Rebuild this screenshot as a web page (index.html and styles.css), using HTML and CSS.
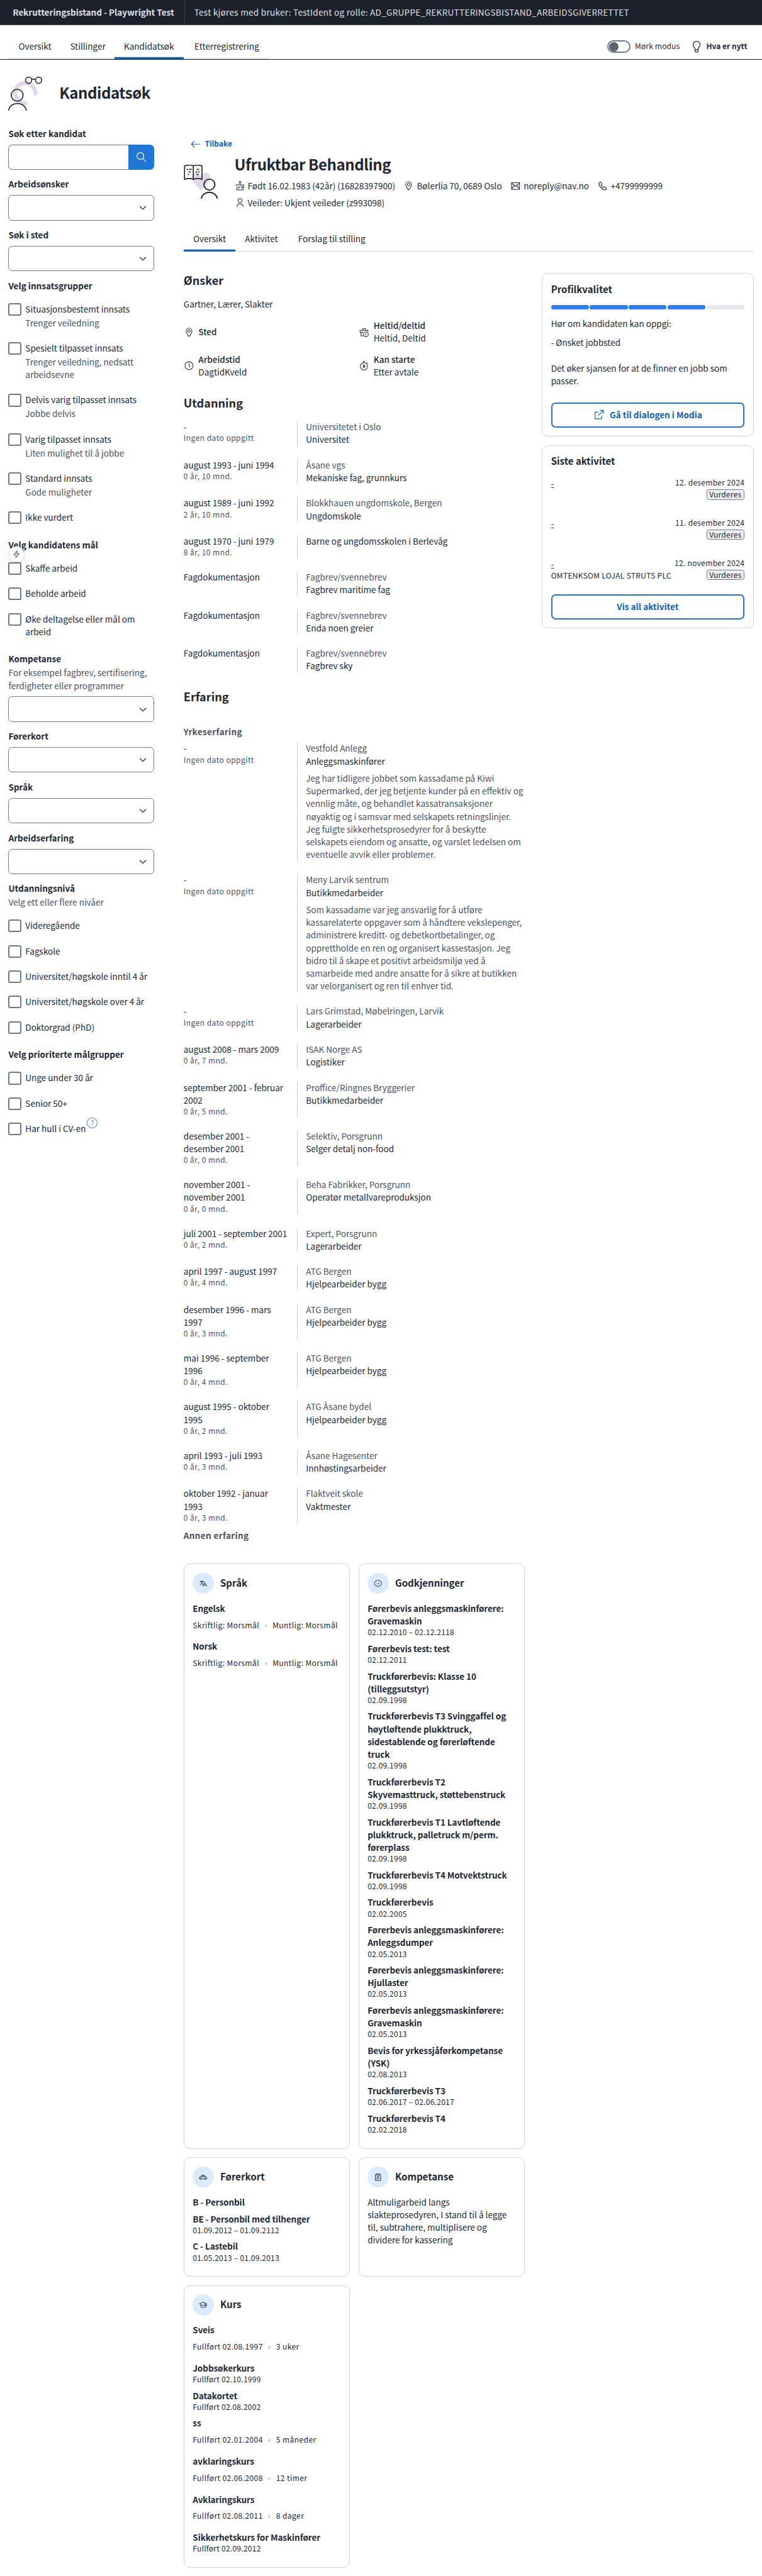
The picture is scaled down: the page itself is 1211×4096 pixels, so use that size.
FILE: index.html
```html
<!DOCTYPE html>
<html lang="no">
<head>
<meta charset="utf-8">
<title>Rekrutteringsbistand</title>
<link rel="stylesheet" href="styles.css">
</head>
<body>
<svg width="0" height="0" class="defs">
  <symbol id="chev" viewBox="0 0 24 24"><path d="M6 9.200l6 5.800 6-5.800"/></symbol>
  <symbol id="pin" viewBox="0 0 24 24"><path d="M12 21.500C8 17 5.500 13 5.500 9.300a6.500 6.700 0 0 1 13 0C18.500 13 16 17 12 21.500z"/><circle cx="12" cy="9.300" r="2.800"/></symbol>
  <symbol id="person" viewBox="0 0 24 24"><circle cx="12" cy="7" r="4.500"/><path d="M5 21.500c0-4.500 3-7 7-7s7 2.500 7 7"/></symbol>
</svg>

<header class="top">
  <p class="top-title">Rekrutteringsbistand - Playwright Test</p>
  <p class="top-user">Test kjøres med bruker: TestIdent og rolle: AD_GRUPPE_REKRUTTERINGSBISTAND_ARBEIDSGIVERRETTET</p>
</header>

<nav class="nav">
  <div class="tabs nav-tabs">
    <a class="tab n1"><span>Oversikt</span></a>
    <a class="tab n2"><span>Stillinger</span></a>
    <a class="tab n3 active"><span>Kandidatsøk</span></a>
    <a class="tab n4"><span>Etterregistrering</span></a>
  </div>
  <div class="nav-right">
    <i class="switch"><i></i></i>
    <span class="t16 mode">Mørk modus</span>
    <svg class="ic bulb" viewBox="0 0 24 24"><path d="M9 18v-2.500C7 13.500 5.500 11.500 5.500 8.500a6.500 6.500 0 0 1 13 0c0 3-1.500 5-3.500 7V18zM9 18v3l1.500 1.500h3L15 21v-3"/></svg>
    <span class="t16 b">Hva er nytt</span>
  </div>
</nav>

<div class="page-title">
  <svg class="illus" viewBox="0 0 64 64">
    <path d="M19 45C8 32 14 13 31 12c12 0 20 9 21 20M20 46c4 4 8 4 13 4" fill="none" stroke="#e0d7e9" stroke-width="7.500" stroke-linecap="round"/>
    <g fill="none" stroke="#262626" stroke-width="1.900"><circle cx="38.500" cy="6.700" r="5.800"/><circle cx="57.500" cy="6.700" r="5.800"/><circle cx="17" cy="35" r="11.200"/><path d="M.8 64C2 56 9 50.500 17.500 50.500S33 56 34.500 64"/></g>
    <path d="M44 6.500c1-4.500 7-4.500 8 0-1.500-1-6.500-1-8 0z" fill="#262626"/>
  </svg>
  <h1>Kandidatsøk</h1>
</div>

<div class="layout">
<aside class="side">
  <div class="field"><p class="b">Søk etter kandidat</p><div class="search"><i class="inp"></i><i class="btn"><svg class="ic" viewBox="0 0 24 24"><circle cx="10" cy="10" r="6.700"/><path d="M15 15l6 6"/></svg></i></div></div>
  <div class="field"><p class="b">Arbeidsønsker</p><div class="select"><svg class="ic"><use href="#chev"/></svg></div></div>
  <div class="field"><p class="b">Søk i sted</p><div class="select"><svg class="ic"><use href="#chev"/></svg></div></div>

  <div class="group g1">
    <p class="b">Velg innsatsgrupper</p>
    <label><i class="box"></i><span><p>Situasjonsbestemt innsats</p><p class="sub">Trenger veiledning</p></span></label>
    <label><i class="box"></i><span><p>Spesielt tilpasset innsats</p><p class="sub l2">Trenger veiledning, nedsatt<br>arbeidsevne</p></span></label>
    <label><i class="box"></i><span><p>Delvis varig tilpasset innsats</p><p class="sub">Jobbe delvis</p></span></label>
    <label><i class="box"></i><span><p>Varig tilpasset innsats</p><p class="sub">Liten mulighet til å jobbe</p></span></label>
    <label><i class="box"></i><span><p>Standard innsats</p><p class="sub">Gode muligheter</p></span></label>
    <label><i class="box"></i><span><p>Ikke vurdert</p></span></label>
  </div>

  <div class="group g2">
    <p class="b">Velg kandidatens mål</p>
    <i class="bolt"><svg viewBox="0 0 24 24"><path d="M13.500 3L5 13.500h5.500V21L19 10.500h-5.500z"/></svg></i>
    <label><i class="box"></i><span><p>Skaffe arbeid</p></span></label>
    <label><i class="box"></i><span><p>Beholde arbeid</p></span></label>
    <label><i class="box"></i><span><p class="l2">Øke deltagelse eller mål om<br>arbeid</p></span></label>
  </div>

  <div class="field desc"><p class="b">Kompetanse</p><p class="sub l2">For eksempel fagbrev, sertifisering,<br>ferdigheter eller programmer</p><div class="select"><svg class="ic"><use href="#chev"/></svg></div></div>
  <div class="field"><p class="b">Førerkort</p><div class="select"><svg class="ic"><use href="#chev"/></svg></div></div>
  <div class="field"><p class="b">Språk</p><div class="select"><svg class="ic"><use href="#chev"/></svg></div></div>
  <div class="field"><p class="b">Arbeidserfaring</p><div class="select"><svg class="ic"><use href="#chev"/></svg></div></div>

  <div class="group g3">
    <p class="b">Utdanningsnivå</p>
    <p class="sub lead">Velg ett eller flere nivåer</p>
    <label><i class="box"></i><span><p>Videregående</p></span></label>
    <label><i class="box"></i><span><p>Fagskole</p></span></label>
    <label><i class="box"></i><span><p>Universitet/høgskole inntil 4 år</p></span></label>
    <label><i class="box"></i><span><p>Universitet/høgskole over 4 år</p></span></label>
    <label><i class="box"></i><span><p>Doktorgrad (PhD)</p></span></label>
  </div>
  <div class="group g4">
    <p class="b">Velg prioriterte målgrupper</p>
    <label><i class="box"></i><span><p>Unge under 30 år</p></span></label>
    <label><i class="box"></i><span><p>Senior 50+</p></span></label>
    <label><i class="box"></i><span><p>Har hull i CV-en</p></span><i class="help">?</i></label>
  </div>
</aside>

<main class="main">
  <a class="back"><svg class="ic" viewBox="0 0 24 24"><path d="M20.500 12h-17M9 5.500L2.800 12 9 18.500"/></svg><span class="t16 b">Tilbake</span></a>
  <div class="person">
    <svg class="illus" viewBox="0 0 64 64">
      <path d="M32 48L17 31c-5-7-1-15 6-15.500 4 0 7 2 9 5 2-3 6-5 10-5 8 1 11 9 6.500 15.500z" fill="#e0d7e9"/>
      <g fill="none" stroke="#262626" stroke-width="2"><path d="M1.500 2.500C7 0 13 0 18 2c5-2 11-2 16.500.5v25c-5-1.800-11-1.800-16.500.2-5-2-11-2-16.500-.2zM18 2v25.500"/><circle cx="48.500" cy="37.500" r="10.300" stroke-width="2.300"/><path d="M33 64c1.500-7 8-12 15.500-12S62 57 63.500 64" stroke-width="2.300"/></g>
      <g stroke="#262626" stroke-width="2.200"><path d="M5.500 8.800h3m2 0h4.500M9 13.500h4M7.500 18.300h2.500M24.500 8.800h4.500M22.500 13.500h3m2 0h2.500M24 18.300h4"/></g>
    </svg>
    <div>
      <h1>Ufruktbar Behandling</h1>
      <div class="facts">
        <p><svg class="ic sm" viewBox="0 0 24 24"><path d="M3.500 12.500v-2.500h17v5c-1.500 1.500-3 .5-3-1.500 0 3-3 3-3 .5V12M5 15v6.500h14V16M12 10V6M8 14v4m2.500-4v4"/><circle cx="12" cy="3.700" r="2"/></svg>Født 16.02.1983 (42år) (16828397900)</p>
        <p><svg class="ic sm"><use href="#pin"/></svg>Bølerlia 70, 0689 Oslo</p>
        <p><svg class="ic sm" viewBox="0 0 24 24"><path d="M3 5h18v15H3zM3 6l9 7.500L21 6M3 19l6-7.500M21 19l-6-7.500"/></svg>noreply@nav.no</p>
        <p><svg class="ic sm" viewBox="0 0 24 24"><path d="M8 3L4 5c-1 7 6 15.500 15 16.500l2.500-4-4.500-3.500-3 2c-2.500-1.500-4-3.500-5-6l2-2z"/></svg>+4799999999</p>
      </div>
      <div class="facts"><p><svg class="ic sm"><use href="#person"/></svg>Veileder: Ukjent veileder (z993098)</p></div>
    </div>
  </div>
  <div class="tabs main-tabs">
    <a class="tab active m1"><span>Oversikt</span></a><a class="tab m2"><span>Aktivitet</span></a><a class="tab m3"><span>Forslag til stilling</span></a>
  </div>

  <div class="cols">
  <div class="cv">
    <h2>Ønsker</h2>
    <p class="jobs">Gartner, Lærer, Slakter</p>
    <div class="wishes">
      <div><svg class="ic"><use href="#pin"/></svg><span><p class="m">Sted</p></span></div>
      <div><svg class="ic" viewBox="0 0 24 24"><path d="M11 20H5.500v-7M3 12V7.500h18V11M8.500 7.500V4h7v3.500M3 12h7M8 11v3"/><circle cx="16.500" cy="16.500" r="5.500"/><path d="M16.500 13.500v3l-1 1.500"/></svg><span><p class="m">Heltid/deltid</p><p>Heltid, Deltid</p></span></div>
      <div><svg class="ic" viewBox="0 0 24 24"><circle cx="12" cy="12" r="9"/><path d="M12 6.500V12l2.500 3.500"/></svg><span><p class="m">Arbeidstid</p><p>DagtidKveld</p></span></div>
      <div><svg class="ic" viewBox="0 0 24 24"><circle cx="12" cy="13.500" r="8.200"/><path d="M9.500 2.500h5M12 2.500v3M18.500 4.500l2 2M10.500 10.500v6l4.500-3z"/></svg><span><p class="m">Kan starte</p><p>Etter avtale</p></span></div>
    </div>

    <h2>Utdanning</h2>
    <div class="rows edu">
      <div class="row"><div><p>-</p><p class="det">Ingen dato oppgitt</p></div><div><p class="sub">Universitetet i Oslo</p><p>Universitet</p></div></div>
      <div class="row"><div><p>august 1993 - juni 1994</p><p class="det">0 år, 10 mnd.</p></div><div><p class="sub">Åsane vgs</p><p>Mekaniske fag, grunnkurs</p></div></div>
      <div class="row"><div><p>august 1989 - juni 1992</p><p class="det">2 år, 10 mnd.</p></div><div><p class="sub">Blokkhauen ungdomskole, Bergen</p><p>Ungdomskole</p></div></div>
      <div class="row"><div><p>august 1970 - juni 1979</p><p class="det">8 år, 10 mnd.</p></div><div><p>Barne og ungdomsskolen i Berlevåg</p></div></div>
      <div class="row"><div><p>Fagdokumentasjon</p></div><div><p class="sub">Fagbrev/svennebrev</p><p>Fagbrev maritime fag</p></div></div>
      <div class="row"><div><p>Fagdokumentasjon</p></div><div><p class="sub">Fagbrev/svennebrev</p><p>Enda noen greier</p></div></div>
      <div class="row"><div><p>Fagdokumentasjon</p></div><div><p class="sub">Fagbrev/svennebrev</p><p>Fagbrev sky</p></div></div>
    </div>

    <h2>Erfaring</h2>
    <h3>Yrkeserfaring</h3>
    <div class="rows">
      <div class="row"><div><p>-</p><p class="det">Ingen dato oppgitt</p></div><div><p class="sub">Vestfold Anlegg</p><p>Anleggsmaskinfører</p><p class="sub long">Jeg har tidligere jobbet som kassadame på Kiwi<br>Supermarked, der jeg betjente kunder på en effektiv og<br>vennlig måte, og behandlet kassatransaksjoner<br>nøyaktig og i samsvar med selskapets retningslinjer.<br>Jeg fulgte sikkerhetsprosedyrer for å beskytte<br>selskapets eiendom og ansatte, og varslet ledelsen om<br>eventuelle avvik eller problemer.</p></div></div>
      <div class="row"><div><p>-</p><p class="det">Ingen dato oppgitt</p></div><div><p class="sub">Meny Larvik sentrum</p><p>Butikkmedarbeider</p><p class="sub long">Som kassadame var jeg ansvarlig for å utføre<br>kassarelaterte oppgaver som å håndtere vekslepenger,<br>administrere kreditt- og debetkortbetalinger, og<br>opprettholde en ren og organisert kassestasjon. Jeg<br>bidro til å skape et positivt arbeidsmiljø ved å<br>samarbeide med andre ansatte for å sikre at butikken<br>var velorganisert og ren til enhver tid.</p></div></div>
      <div class="row"><div><p>-</p><p class="det">Ingen dato oppgitt</p></div><div><p class="sub">Lars Grimstad, Møbelringen, Larvik</p><p>Lagerarbeider</p></div></div>
      <div class="row"><div><p>august 2008 - mars 2009</p><p class="det">0 år, 7 mnd.</p></div><div><p class="sub">ISAK Norge AS</p><p>Logistiker</p></div></div>
      <div class="row"><div><p class="l2">september 2001 - februar<br>2002</p><p class="det">0 år, 5 mnd.</p></div><div><p class="sub">Proffice/Ringnes Bryggerier</p><p>Butikkmedarbeider</p></div></div>
      <div class="row"><div><p class="l2">desember 2001 -<br>desember 2001</p><p class="det">0 år, 0 mnd.</p></div><div><p class="sub">Selektiv, Porsgrunn</p><p>Selger detalj non-food</p></div></div>
      <div class="row"><div><p class="l2">november 2001 -<br>november 2001</p><p class="det">0 år, 0 mnd.</p></div><div><p class="sub">Beha Fabrikker, Porsgrunn</p><p>Operatør metallvareproduksjon</p></div></div>
      <div class="row"><div><p>juli 2001 - september 2001</p><p class="det">0 år, 2 mnd.</p></div><div><p class="sub">Expert, Porsgrunn</p><p>Lagerarbeider</p></div></div>
      <div class="row"><div><p>april 1997 - august 1997</p><p class="det">0 år, 4 mnd.</p></div><div><p class="sub">ATG Bergen</p><p>Hjelpearbeider bygg</p></div></div>
      <div class="row"><div><p class="l2">desember 1996 - mars<br>1997</p><p class="det">0 år, 3 mnd.</p></div><div><p class="sub">ATG Bergen</p><p>Hjelpearbeider bygg</p></div></div>
      <div class="row"><div><p class="l2">mai 1996 - september<br>1996</p><p class="det">0 år, 4 mnd.</p></div><div><p class="sub">ATG Bergen</p><p>Hjelpearbeider bygg</p></div></div>
      <div class="row"><div><p class="l2">august 1995 - oktober<br>1995</p><p class="det">0 år, 2 mnd.</p></div><div><p class="sub">ATG Åsane bydel</p><p>Hjelpearbeider bygg</p></div></div>
      <div class="row"><div><p>april 1993 - juli 1993</p><p class="det">0 år, 3 mnd.</p></div><div><p class="sub">Åsane Hagesenter</p><p>Innhøstingsarbeider</p></div></div>
      <div class="row"><div><p class="l2">oktober 1992 - januar<br>1993</p><p class="det">0 år, 3 mnd.</p></div><div><p class="sub">Flaktveit skole</p><p>Vaktmester</p></div></div>
    </div>
    <h3 class="other">Annen erfaring</h3>

    <div class="cards">
      <section class="card">
        <div class="head"><i class="circ"><svg class="ic" viewBox="0 0 24 24"><path d="M2.500 6.500h13M9 3.500v3M13 6.500C12 11 8 14.500 3 16.500M5 6.500c1 4 4 7.500 8.500 9.500M11.500 20.500l5.500-11 5.500 11M13.500 17h7"/></svg></i><h4>Språk</h4></div>
        <div class="item"><p class="b">Engelsk</p><div class="dots"><p>Skriftlig: Morsmål</p><i></i><p>Muntlig: Morsmål</p></div></div>
        <div class="item"><p class="b">Norsk</p><div class="dots"><p>Skriftlig: Morsmål</p><i></i><p>Muntlig: Morsmål</p></div></div>
      </section>
      <section class="card">
        <div class="head"><i class="circ"><svg class="ic" viewBox="0 0 24 24"><path d="M12 2.500l2.700 1.700 3.200-.2 1.400 2.900 2.700 1.600-.5 3.200.5 3.500-2.900 1.500-1.400 2.900-3.200-.2L12 21.500l-2.700-2.100-3.200.2-1.400-2.900L2 15.200l.5-3.500L2 8.500l2.700-1.600L6.100 4l3.200.2zM8.500 12l2.500 2.500 4.500-5"/></svg></i><h4>Godkjenninger</h4></div>
        <div class="item"><p class="b l2">Førerbevis anleggsmaskinførere:<br>Gravemaskin</p><p class="date">02.12.2010 – 02.12.2118</p></div>
        <div class="item"><p class="b">Førerbevis test: test</p><p class="date">02.12.2011</p></div>
        <div class="item"><p class="b l2">Truckførerbevis: Klasse 10<br>(tilleggsutstyr)</p><p class="date">02.09.1998</p></div>
        <div class="item"><p class="b l4">Truckførerbevis T3 Svinggaffel og<br>høytløftende plukktruck,<br>sidestablende og førerløftende<br>truck</p><p class="date">02.09.1998</p></div>
        <div class="item"><p class="b l2">Truckførerbevis T2<br>Skyvemasttruck, støttebenstruck</p><p class="date">02.09.1998</p></div>
        <div class="item"><p class="b l3">Truckførerbevis T1 Lavtløftende<br>plukktruck, palletruck m/perm.<br>førerplass</p><p class="date">02.09.1998</p></div>
        <div class="item"><p class="b">Truckførerbevis T4 Motvektstruck</p><p class="date">02.09.1998</p></div>
        <div class="item"><p class="b">Truckførerbevis</p><p class="date">02.02.2005</p></div>
        <div class="item"><p class="b l2">Førerbevis anleggsmaskinførere:<br>Anleggsdumper</p><p class="date">02.05.2013</p></div>
        <div class="item"><p class="b l2">Førerbevis anleggsmaskinførere:<br>Hjullaster</p><p class="date">02.05.2013</p></div>
        <div class="item"><p class="b l2">Førerbevis anleggsmaskinførere:<br>Gravemaskin</p><p class="date">02.05.2013</p></div>
        <div class="item"><p class="b l2">Bevis for yrkessjåførkompetanse<br>(YSK)</p><p class="date">02.08.2013</p></div>
        <div class="item"><p class="b">Truckførerbevis T3</p><p class="date">02.06.2017 – 02.06.2017</p></div>
        <div class="item"><p class="b">Truckførerbevis T4</p><p class="date">02.02.2018</p></div>
      </section>
      <section class="card">
        <div class="head"><i class="circ"><svg class="ic" viewBox="0 0 24 24"><path d="M4 17H1.800v-4.500L5.500 11l3-4.500h7L19 11l3.500 1.500V17H20M8 17h8M5.500 11H19M12 6.500V11"/><circle cx="6" cy="17" r="2"/><circle cx="18" cy="17" r="2"/></svg></i><h4>Førerkort</h4></div>
        <div class="item"><p class="b">B - Personbil</p></div>
        <div class="item"><p class="b">BE - Personbil med tilhenger</p><p class="date">01.09.2012 – 01.09.2112</p></div>
        <div class="item"><p class="b">C - Lastebil</p><p class="date">01.05.2013 – 01.09.2013</p></div>
      </section>
      <section class="card">
        <div class="head"><i class="circ"><svg class="ic" viewBox="0 0 24 24"><path d="M8 4.500H4.500v17h15v-17H16M8 2.500h8v4H8zM8 10.500h8M8 14h8M8 17.500h5"/></svg></i><h4>Kompetanse</h4></div>
        <p class="l4">Altmuligarbeid langs<br>slakteprosedyren, I stand til å legge<br>til, subtrahere, multiplisere og<br>dividere for kassering</p>
      </section>
      <section class="card">
        <div class="head"><i class="circ"><svg class="ic" viewBox="0 0 24 24"><path d="M12 4.500L1.500 9.500 12 14.500l9-4.500zM5.500 11.500V18c3.500 2.500 9.500 2.500 13 0v-6.500M12 4.500l9.500 4.500v9"/></svg></i><h4>Kurs</h4></div>
        <div class="item"><p class="b">Sveis</p><div class="dots"><p>Fullført 02.08.1997</p><i></i><p>3 uker</p></div></div>
        <div class="item"><p class="b">Jobbsøkerkurs</p><p class="date">Fullført 02.10.1999</p></div>
        <div class="item"><p class="b">Datakortet</p><p class="date">Fullført 02.08.2002</p></div>
        <div class="item"><p class="b">ss</p><div class="dots"><p>Fullført 02.01.2004</p><i></i><p>5 måneder</p></div></div>
        <div class="item"><p class="b">avklaringskurs</p><div class="dots"><p>Fullført 02.06.2008</p><i></i><p>12 timer</p></div></div>
        <div class="item"><p class="b">Avklaringskurs</p><div class="dots"><p>Fullført 02.08.2011</p><i></i><p>8 dager</p></div></div>
        <div class="item"><p class="b">Sikkerhetskurs for Maskinfører</p><p class="date">Fullført 02.09.2012</p></div>
      </section>
    </div>
  </div>

  <div class="right">
    <section class="card quality">
      <h4>Profilkvalitet</h4>
      <div class="bars"><i></i><i></i><i></i><i></i><i class="off"></i></div>
      <p>Hør om kandidaten kan oppgi:</p>
      <p class="miss">- Ønsket jobbsted</p>
      <p class="l2">Det øker sjansen for at de finner en jobb som<br>passer.</p>
      <a class="button"><svg class="ic" viewBox="0 0 24 24"><path d="M13.500 3.500h7v7M20.500 3.500L10 14M10 7H3.500v13.500H17V14"/></svg><span>Gå til dialogen i Modia</span></a>
    </section>
    <section class="card activity">
      <h4>Siste aktivitet</h4>
      <div class="act"><div><p class="u">-</p></div><div class="when"><p>12. desember 2024</p><b>Vurderes</b></div></div>
      <div class="act"><div><p class="u">-</p></div><div class="when"><p>11. desember 2024</p><b>Vurderes</b></div></div>
      <div class="act"><div><p class="u">-</p><p class="firm">OMTENKSOM LOJAL STRUTS PLC</p></div><div class="when"><p>12. november 2024</p><b>Vurderes</b></div></div>
      <a class="button"><span>Vis all aktivitet</span></a>
    </section>
  </div>
  </div>
</main>
</div>
</body>
</html>
```
FILE: styles.css
```css
html { font-size: 8.41px; }
* { box-sizing: border-box; }
body { margin: 0; background: #fff; color: #202733; font-family: "Noto Sans CJK SC", "Noto Sans CJK JP", sans-serif; font-size: 1.61rem; line-height: 2.4rem; }
p, h1, h2, h3, h4 { margin: 0; font-weight: 400; font-size: inherit; }
/* the font's tall ascent sets glyphs a little low in the line box */
p, h3, h4, .tab span, .nav-right span, .back span, .button span { translate: 0 -1px; }
h1, h2 { translate: 0 -2px; }
p { min-height: 2.4rem; }
.l2 { min-height: 4.8rem; }
.l3 { min-height: 7.2rem; }
.l4 { min-height: 9.6rem; }
i { font-style: normal; display: block; flex: none; }
.defs { display: block; }
.b, h1, h2, h3, h4 { font-weight: 600; }
.m { font-weight: 500; }
.sub { color: #49515e; }
.t16, .det, .date { font-size: 1.43rem; }
.ic { width: 2rem; height: 2rem; flex: none; display: block; fill: none; stroke: currentColor; stroke-width: 1.5; }
.illus { width: 6.4rem; height: 6.4rem; flex: none; }

.top { height: 4.8rem; background: #1c212c; border-bottom: 1px solid #3b4150; color: #dfe2e8; display: flex; align-items: stretch; line-height: 4.7rem; white-space: nowrap; }
.top p { translate: none; height: 100%; padding-bottom: .1rem; }
.top-title { width: 35rem; padding-left: 2.4rem; font-weight: 600; border-right: 1px solid #3b4150; }
.top-user { padding-left: 1.7rem; letter-spacing: .035rem; }

.nav { height: 6.5rem; border-bottom: 1px solid #1c212c; display: flex; justify-content: space-between; align-items: flex-end; padding: 0 2.8rem 0 1.6rem; }
.tabs { display: flex; }
.tab { height: 4.8rem; display: flex; justify-content: center; align-items: center; white-space: nowrap; }
.nav-tabs { border-bottom: 1px solid #cfd3d8; }
.nav-tabs .tab { margin-bottom: -1px; }
.tab.active { box-shadow: inset 0 -.4rem #0063c1; }
.n1 { width: 10rem; }
.n2 { width: 10rem; }
.n3 { width: 13.1rem; }
.n4 { width: 16.3rem; }
.nav-right { display: flex; align-items: center; margin-bottom: 1.2rem; }
.nav-right span { white-space: nowrap; }
.switch { width: 4.4rem; height: 2.4rem; border: 2px solid #6f7885; border-radius: 1.2rem; padding: .1rem; }
.switch i { width: 1.8rem; height: 1.8rem; border-radius: 50%; background: #596271; }
.mode { margin-left: .8rem; width: 10.5rem; letter-spacing: .02rem; }
.bulb { width: 2.4rem; height: 2.4rem; margin-right: .6rem; }

.page-title { display: flex; align-items: center; gap: 3.2rem; height: 6.4rem; margin: 3.2rem 0 0 1.6rem; }
h1 { font-size: 2.86rem; line-height: 4rem; height: 4rem; letter-spacing: -.018em; }

.layout { display: flex; align-items: flex-start; }
.side { width: 27.5rem; margin: 3.2rem 0 0 1.6rem; flex: none; }
.field { margin-bottom: 1.6rem; }
.select, .search { margin-top: .8rem; height: 4.8rem; border-radius: .8rem; }
.select { border: 1px solid #6f7885; display: flex; align-items: center; justify-content: flex-end; padding-right: .8rem; }
.select .ic { width: 2.4rem; height: 2.4rem; }
.search { display: flex; }
.inp { flex: 1; border: 1px solid #6f7885; border-right: 0; border-radius: .8rem 0 0 .8rem; }
.btn { width: 4.8rem; background: #2176d4; color: #fff; border-radius: 0 .8rem .8rem 0; display: flex; align-items: center; justify-content: center; }
.btn .ic { width: 2.3rem; height: 2.3rem; }
.desc .sub { margin-top: .2rem; white-space: nowrap; }
.group { position: relative; }
.group > .b { margin-bottom: 2rem; }
.group label { display: flex; gap: .8rem; margin-bottom: 2.4rem; }
.group label span { flex: none; white-space: nowrap; }
.group label .sub { margin-top: .2rem; }
.box { width: 2.4rem; height: 2.4rem; border: 2px solid #6f7885; border-radius: .4rem; }
.g1, .g2, .g3 { margin-bottom: 2.8rem; }
.g3 > .b { margin-bottom: 0; }
.g3 > .lead { margin: .2rem 0 2rem; }
.bolt { position: absolute; left: .1rem; top: 1.55rem; width: 2.8rem; height: 2.8rem; border-radius: 50%; background: #fff; box-shadow: 0 0 0 1px #e4e4e4, 0 .2rem .4rem rgba(0,0,0,.12), 0 1rem 3.5rem rgba(0,0,0,.1); display: flex; align-items: center; justify-content: center; }
.bolt svg { width: 1.7rem; height: 1.7rem; fill: none; stroke: #777; stroke-width: 2.2; stroke-linejoin: round; }
.help { width: 2rem; height: 2rem; border: 1px solid #3b7ea3; border-radius: 50%; color: #3b7ea3; font-size: 1.2rem; line-height: 1.7rem; text-align: center; margin: -1rem 0 0 -.6rem; }

.main { width: 107.7rem; margin-left: 5.6rem; padding-top: 5.2rem; }
.back { color: #0f5fb8; display: flex; align-items: center; gap: .6rem; padding-left: 1.2rem; height: 2.4rem; }
.back .ic { width: 2.2rem; height: 2.2rem; }
.person { display: flex; gap: 3.2rem; margin-top: .7rem; }
.person .illus { margin-top: 2rem; }
.person h1 { margin-bottom: .8rem; }
.facts { display: flex; gap: 1.6rem; margin-bottom: .8rem; height: 2.4rem; }
.facts p { display: flex; align-items: center; gap: .5rem; white-space: nowrap; }
.sm { margin-top: .2rem; }
.main-tabs { border-bottom: 1px solid #cfd3d8; margin-top: 2.4rem; }
.main-tabs .tab { margin-bottom: -1px; }
.m1, .m2 { width: 9.8rem; }
.m3 { width: 16.8rem; }

.cols { display: flex; justify-content: space-between; align-items: flex-start; }
.cv { width: 64.5rem; padding-top: 4rem; }
h2 { font-size: 2.15rem; line-height: 3.2rem; height: 3.2rem; }
.jobs { margin: 1.6rem 0; }
.wishes { display: grid; grid-template-columns: 33.1rem 1fr; row-gap: 1.6rem; grid-auto-rows: 4.8rem; margin-bottom: 3.2rem; }
.wishes > div { display: flex; align-items: center; gap: .8rem; }
.rows { display: grid; row-gap: 2.4rem; margin-top: .8rem; }
.row { display: grid; grid-template-columns: 21.4rem 1fr; }
.row p { white-space: nowrap; }
.row > div + div { border-left: 1px solid #c9ccd2; padding-left: 1.6rem; }
.det, .date { line-height: 2rem; min-height: 0; height: 2rem; }
.det { color: #49515e; letter-spacing: .055rem; }
.date { letter-spacing: .03rem; }
.row .long { margin-top: .8rem; min-height: 16.8rem; padding-top: .05rem; }
.edu { margin: 1.6rem 0 3.2rem; }
h3 { line-height: 2.4rem; height: 2.4rem; color: #49515e; margin-top: 3.6rem; letter-spacing: .04rem; }
.other { margin-top: 1.1rem; }

.cards { display: grid; grid-template-columns: 1fr 1fr; gap: 1.6rem; margin-top: 4.1rem; }
.card { border: 1px solid #cfd3d8; border-radius: 1.2rem; padding: 1.6rem; }
.head { display: flex; align-items: center; gap: 1.2rem; margin-bottom: 1.6rem; }
.circ { width: 4rem; height: 4rem; border-radius: 50%; background: #dbeafe; display: flex; align-items: center; justify-content: center; }
.circ .ic { width: 1.6rem; height: 1.6rem; stroke-width: 1.7; }
h4 { font-size: 1.79rem; line-height: 2.8rem; height: 2.8rem; }
.item { padding-bottom: .8rem; white-space: nowrap; }
.item .b { letter-spacing: -.01rem; }
.dots { height: 4rem; display: flex; align-items: center; gap: 1rem; font-size: 1.43rem; letter-spacing: .05rem; }
.dots i { width: .5rem; height: .5rem; border-radius: 50%; background: #d1d5dc; }

.right { width: 40rem; margin-top: 4.05rem; display: grid; gap: 1.6rem; }
.bars { display: grid; grid-template-columns: repeat(5, 1fr); gap: .2rem; margin: 1.5rem 0 1.6rem; }
.bars i { height: .8rem; border-radius: .4rem; background: #2b7fff; }
.bars .off { background: #e5e7eb; }
.quality p { white-space: nowrap; }
.miss { margin: 1.2rem 0 2.4rem; }
.button { height: 4.8rem; border: 2px solid #2176d4; border-radius: .8rem; color: #0f5fb8; font-weight: 600; display: flex; align-items: center; justify-content: center; gap: .9rem; }
.button .ic { width: 2.2rem; height: 2.2rem; }
.quality .button { margin-top: 2.8rem; }
.act { display: flex; justify-content: space-between; height: 7.6rem; }
.u { text-decoration: underline; }
.firm, .when { font-size: 1.43rem; line-height: 2.2rem; letter-spacing: .035rem; white-space: nowrap; }
.when { display: flex; flex-direction: column; align-items: flex-end; }
.when p { min-height: 2.2rem; height: 2.2rem; }
.when b { font-weight: 400; border: 1px solid #6f7885; border-radius: .4rem; background: #eceef0; height: 2rem; line-height: 1.6rem; padding: 0 .4rem; }
.activity h4 { margin-bottom: 1.6rem; }
.activity .button { margin-top: -.75rem; }
```
